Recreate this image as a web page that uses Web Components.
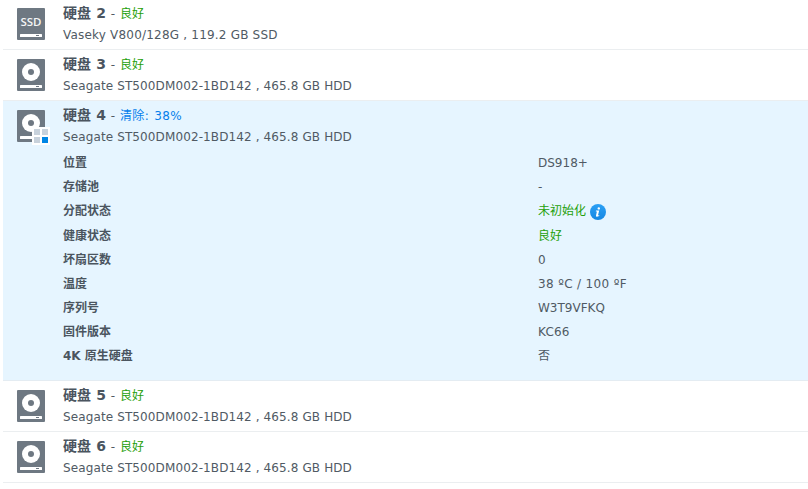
<!DOCTYPE html>
<html lang="zh-CN">
<head>
<meta charset="utf-8">
<title>硬盘</title>
<style>
html,body{margin:0;background:#fff}
body{height:489px;overflow:hidden;font:12px/21px "DejaVu Sans","Noto Sans CJK SC",sans-serif;color:#505a64}
</style>
</head>
<body>
<disk-list>
  <disk-row name="硬盘 2" status="良好" model="Vaseky V800/128G , 119.2 GB SSD" type="ssd"></disk-row>
  <disk-row name="硬盘 3" status="良好" model="Seagate ST500DM002-1BD142 , 465.8 GB HDD"></disk-row>
  <disk-row name="硬盘 4" status="清除: 38%" model="Seagate ST500DM002-1BD142 , 465.8 GB HDD" type="busy" open>
    <disk-field label="位置">DS918+</disk-field>
    <disk-field label="存储池">-</disk-field>
    <disk-field label="分配状态" good info>未初始化</disk-field>
    <disk-field label="健康状态" good>良好</disk-field>
    <disk-field label="坏扇区数">0</disk-field>
    <disk-field label="温度" style="letter-spacing:.35px">38 ºC / 100 ºF</disk-field>
    <disk-field label="序列号">W3T9VFKQ</disk-field>
    <disk-field label="固件版本" style="letter-spacing:.2px">KC66</disk-field>
    <disk-field label="4K 原生硬盘">否</disk-field>
  </disk-row>
  <disk-row name="硬盘 5" status="良好" model="Seagate ST500DM002-1BD142 , 465.8 GB HDD"></disk-row>
  <disk-row name="硬盘 6" status="良好" model="Seagate ST500DM002-1BD142 , 465.8 GB HDD"></disk-row>
</disk-list>
<script>
class DiskList extends HTMLElement{
  constructor(){
    super();
    this.attachShadow({mode:'open'}).innerHTML=`<style>:host{display:flex;flex-direction:column;margin:-1px 0 0 3px}</style><slot></slot>`;
  }
}
class DiskIcon extends HTMLElement{
  connectedCallback(){
    const type=this.getAttribute('type');
    const face=type==='ssd'
      ?'<text x="3.5" y="17.8" textLength="21" lengthAdjust="spacingAndGlyphs">SSD</text>'
      :'<circle cx="14" cy="13" r="9" fill="#fff"/><circle cx="14" cy="13" r="3" fill="#6e7882"/>';
    const badge=type==='busy'
      ?'<path d="M15 17h18v18H15z" fill="#fff"/><path d="M17 19h6v6h-6zM25 19h6v6h-6zM17 27h6v6h-6z" fill="#c8d2dc"/><path d="M25 27h6v6h-6z" fill="#0086e5"/>':'';
    this.attachShadow({mode:'open'}).innerHTML=`<style>:host{display:block;width:28px;height:32px}svg{display:block;overflow:visible}text{font:600 11.5px/1 "Open Sans","Noto Sans",sans-serif;fill:#f4f5f6}</style>
    <svg width="28" height="32"><rect width="28" height="32" rx="1" fill="#6e7882"/>${face}
    <rect x="3" y="26" width="22" height="3" rx=".5" fill="#fff"/><path d="M19 27h3v1h-3z" fill="#6e7882"/>${badge}</svg>`;
  }
}
class InfoIcon extends HTMLElement{
  constructor(){
    super();
    this.attachShadow({mode:'open'}).innerHTML=`<style>:host{display:block;flex:none;width:16px;height:16px}svg{display:block}</style>
    <svg width="16" height="16"><defs><linearGradient id="g" x2="0" y2="1"><stop stop-color="#2ba0f5"/><stop offset="1" stop-color="#1687e2"/></linearGradient></defs><circle cx="8" cy="8" r="8" fill="url(#g)"/><circle cx="8.8" cy="4.4" r="1.2" fill="#fff"/><path d="M6 6.6h3.2L8 11.2q0 .5 1.3-.1l-.2.8Q5.7 13.6 6 11.4l.9-3.9-1.1-.1z" fill="#fff"/></svg>`;
  }
}
class DiskField extends HTMLElement{
  connectedCallback(){
    this.attachShadow({mode:'open'}).innerHTML=`<style>
    :host{display:grid;grid-template-columns:475px 1fr;height:24px;line-height:24px}
    :host([info]){height:25px}
    b{font-weight:700;letter-spacing:0;color:#4b555f}
    .value{display:flex;align-items:flex-start;height:24px}
    :host([good]) .value{color:#1ea00a}
    info-icon{margin:5px 0 0 4px}
    </style><b>${this.getAttribute('label')}</b><div class="value"><span><slot></slot></span>${this.hasAttribute('info')?'<info-icon></info-icon>':''}</div>`;
  }
}
class DiskRow extends HTMLElement{
  connectedCallback(){
    const a=n=>this.getAttribute(n)||'';
    this.attachShadow({mode:'open'}).innerHTML=`<style>
    :host{display:grid;grid-template-columns:46px 1fr;align-items:start;box-sizing:border-box;height:51px;padding:9px 0 0 14px;border-bottom:1px solid #ebeef0}
    :host([open]){height:280px;background:#e6f5ff;border-color:#e4ecf2}
    .title,.model{white-space:pre;height:21px;line-height:21px}
    .title{margin-top:-5px;word-spacing:1px}
    b{font-size:14px;word-spacing:.4px;color:#4b555f}
    .status{color:#1ea00a}
    :host([open]) .status{color:#057feb;letter-spacing:.35px}
    .model{padding-top:1px;letter-spacing:.115px}
    :host([type=ssd]) .model{letter-spacing:.2px}
    .fields{margin-top:3px}
    </style>
    <disk-icon type="${a('type')}"></disk-icon>
    <div><div class="title"><b>${a('name')}</b> - <span class="status">${a('status')}</span></div><div class="model">${a('model')}</div><div class="fields"><slot></slot></div></div>`;
  }
}
customElements.define('disk-icon',DiskIcon);
customElements.define('info-icon',InfoIcon);
customElements.define('disk-field',DiskField);
customElements.define('disk-row',DiskRow);
customElements.define('disk-list',DiskList);
</script>
</body>
</html>
